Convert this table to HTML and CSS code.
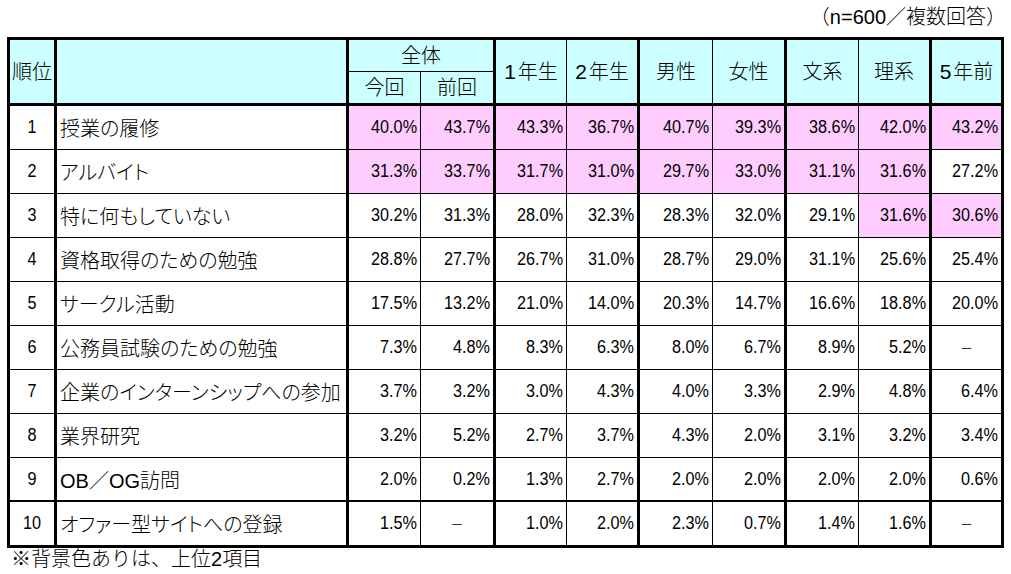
FILE: index.html
```html
<!DOCTYPE html>
<html lang="ja">
<head>
<meta charset="utf-8">
<title>活動ランキング</title>
<link rel="stylesheet" href="styles.css">
</head>
<body>
<div class="page">
  <div class="note">（n=600／複数回答）</div>
  <table class="rank-table">
    <colgroup>
      <col class="c-rank"><col class="c-item"><col class="c-now"><col class="c-prev">
      <col class="c-g1"><col class="c-g2"><col class="c-m"><col class="c-f">
      <col class="c-bun"><col class="c-ri"><col class="c-5y">
    </colgroup>
    <thead>
      <tr class="hr1">
        <th rowspan="2" class="h rs t3">順位</th>
        <th rowspan="2" class="h rs t3"></th>
        <th colspan="2" class="h t3">全体</th>
        <th rowspan="2" class="h rs"><span class="hd">1</span>年生</th>
        <th rowspan="2" class="h rs t3"><span class="hd">2</span>年生</th>
        <th rowspan="2" class="h rs">男性</th>
        <th rowspan="2" class="h rs t3">女性</th>
        <th rowspan="2" class="h rs">文系</th>
        <th rowspan="2" class="h rs t3">理系</th>
        <th rowspan="2" class="h rs t3"><span class="hd">5</span>年前</th>
      </tr>
      <tr class="hr2">
        <th class="h rs">今回</th>
        <th class="h rs t3">前回</th>
      </tr>
    </thead>
    <tbody>
      <tr>
        <td class="rk t3"><span class="v">1</span></td><td class="it t3">授業の履修</td>
        <td class="n pk"><span class="v">40.0%</span></td><td class="n pk t3"><span class="v">43.7%</span></td>
        <td class="n pk"><span class="v">43.3%</span></td><td class="n pk t3"><span class="v">36.7%</span></td>
        <td class="n pk"><span class="v">40.7%</span></td><td class="n pk t3"><span class="v">39.3%</span></td>
        <td class="n pk"><span class="v">38.6%</span></td><td class="n pk t3"><span class="v">42.0%</span></td>
        <td class="n pk t3"><span class="v">43.2%</span></td>
      </tr>
      <tr>
        <td class="rk t3"><span class="v">2</span></td><td class="it t3">アルバイト</td>
        <td class="n pk"><span class="v">31.3%</span></td><td class="n pk t3"><span class="v">33.7%</span></td>
        <td class="n pk"><span class="v">31.7%</span></td><td class="n pk t3"><span class="v">31.0%</span></td>
        <td class="n pk"><span class="v">29.7%</span></td><td class="n pk t3"><span class="v">33.0%</span></td>
        <td class="n pk"><span class="v">31.1%</span></td><td class="n pk t3"><span class="v">31.6%</span></td>
        <td class="n t3"><span class="v">27.2%</span></td>
      </tr>
      <tr>
        <td class="rk t3"><span class="v">3</span></td><td class="it t3">特に何もしていない</td>
        <td class="n"><span class="v">30.2%</span></td><td class="n t3"><span class="v">31.3%</span></td>
        <td class="n"><span class="v">28.0%</span></td><td class="n t3"><span class="v">32.3%</span></td>
        <td class="n"><span class="v">28.3%</span></td><td class="n t3"><span class="v">32.0%</span></td>
        <td class="n"><span class="v">29.1%</span></td><td class="n pk t3"><span class="v">31.6%</span></td>
        <td class="n pk t3"><span class="v">30.6%</span></td>
      </tr>
      <tr>
        <td class="rk t3"><span class="v">4</span></td><td class="it t3">資格取得のための勉強</td>
        <td class="n"><span class="v">28.8%</span></td><td class="n t3"><span class="v">27.7%</span></td>
        <td class="n"><span class="v">26.7%</span></td><td class="n t3"><span class="v">31.0%</span></td>
        <td class="n"><span class="v">28.7%</span></td><td class="n t3"><span class="v">29.0%</span></td>
        <td class="n"><span class="v">31.1%</span></td><td class="n t3"><span class="v">25.6%</span></td>
        <td class="n t3"><span class="v">25.4%</span></td>
      </tr>
      <tr>
        <td class="rk t3"><span class="v">5</span></td><td class="it t3">サークル活動</td>
        <td class="n"><span class="v">17.5%</span></td><td class="n t3"><span class="v">13.2%</span></td>
        <td class="n"><span class="v">21.0%</span></td><td class="n t3"><span class="v">14.0%</span></td>
        <td class="n"><span class="v">20.3%</span></td><td class="n t3"><span class="v">14.7%</span></td>
        <td class="n"><span class="v">16.6%</span></td><td class="n t3"><span class="v">18.8%</span></td>
        <td class="n t3"><span class="v">20.0%</span></td>
      </tr>
      <tr>
        <td class="rk t3"><span class="v">6</span></td><td class="it t3">公務員試験のための勉強</td>
        <td class="n"><span class="v">7.3%</span></td><td class="n t3"><span class="v">4.8%</span></td>
        <td class="n"><span class="v">8.3%</span></td><td class="n t3"><span class="v">6.3%</span></td>
        <td class="n"><span class="v">8.0%</span></td><td class="n t3"><span class="v">6.7%</span></td>
        <td class="n"><span class="v">8.9%</span></td><td class="n t3"><span class="v">5.2%</span></td>
        <td class="dash t3">－</td>
      </tr>
      <tr>
        <td class="rk t3"><span class="v">7</span></td><td class="it t3">企業のインターンシップへの参加</td>
        <td class="n"><span class="v">3.7%</span></td><td class="n t3"><span class="v">3.2%</span></td>
        <td class="n"><span class="v">3.0%</span></td><td class="n t3"><span class="v">4.3%</span></td>
        <td class="n"><span class="v">4.0%</span></td><td class="n t3"><span class="v">3.3%</span></td>
        <td class="n"><span class="v">2.9%</span></td><td class="n t3"><span class="v">4.8%</span></td>
        <td class="n t3"><span class="v">6.4%</span></td>
      </tr>
      <tr>
        <td class="rk t3"><span class="v">8</span></td><td class="it t3">業界研究</td>
        <td class="n"><span class="v">3.2%</span></td><td class="n t3"><span class="v">5.2%</span></td>
        <td class="n"><span class="v">2.7%</span></td><td class="n t3"><span class="v">3.7%</span></td>
        <td class="n"><span class="v">4.3%</span></td><td class="n t3"><span class="v">2.0%</span></td>
        <td class="n"><span class="v">3.1%</span></td><td class="n t3"><span class="v">3.2%</span></td>
        <td class="n t3"><span class="v">3.4%</span></td>
      </tr>
      <tr class="r9">
        <td class="rk t3"><span class="v">9</span></td><td class="it t3">OB／OG訪問</td>
        <td class="n"><span class="v">2.0%</span></td><td class="n t3"><span class="v">0.2%</span></td>
        <td class="n"><span class="v">1.3%</span></td><td class="n t3"><span class="v">2.7%</span></td>
        <td class="n"><span class="v">2.0%</span></td><td class="n t3"><span class="v">2.0%</span></td>
        <td class="n"><span class="v">2.0%</span></td><td class="n t3"><span class="v">2.0%</span></td>
        <td class="n t3"><span class="v">0.6%</span></td>
      </tr>
      <tr class="r10">
        <td class="rk t3"><span class="v">10</span></td><td class="it t3">オファー型サイトへの登録</td>
        <td class="n"><span class="v">1.5%</span></td><td class="dash t3">－</td>
        <td class="n"><span class="v">1.0%</span></td><td class="n t3"><span class="v">2.0%</span></td>
        <td class="n"><span class="v">2.3%</span></td><td class="n t3"><span class="v">0.7%</span></td>
        <td class="n"><span class="v">1.4%</span></td><td class="n t3"><span class="v">1.6%</span></td>
        <td class="dash t3">－</td>
      </tr>
    </tbody>
  </table>
  <div class="footnote">※背景色ありは、上位<span class="fd">2</span>項目</div>
</div>
</body>
</html>
```
FILE: styles.css
```css
html, body {
  margin: 0;
  padding: 0;
  background: #ffffff;
}
body {
  font-family: "Liberation Sans", "Noto Sans CJK JP", sans-serif;
  font-weight: 400;
  color: #000000;
}
.page {
  width: 1011px;
  height: 574px;
  overflow: hidden;
}
.note {
  height: 37px;
  box-sizing: border-box;
  padding: 5px 5px 0 0;
  text-align: right;
  font-size: 20px;
  font-weight: 300;
  line-height: 24px;
}
.rank-table {
  margin-left: 7px;
  width: 997px;
  table-layout: fixed;
  border-collapse: separate;
  border-spacing: 0;
  border-left: 3px solid #000;
  border-top: 3px solid #000;
}
.c-rank { width: 47px; }
.c-item { width: 292px; }
.c-now { width: 72px; }
.c-prev { width: 75px; }
.c-g1 { width: 71px; }
.c-g2 { width: 73px; }
.c-m { width: 73px; }
.c-f { width: 74px; }
.c-bun { width: 72px; }
.c-ri { width: 73px; }
.c-5y { width: 72px; }

.rank-table th,
.rank-table td {
  box-sizing: border-box;
  padding: 0;
  border-right: 1px solid #000;
  border-bottom: 1px solid #000;
  white-space: nowrap;
  overflow: hidden;
}
.rank-table .t3 { border-right-width: 3px; }
.rank-table .rs { border-bottom-width: 3px; }

.h {
  background: #ccffff;
  font-weight: 300;
  font-size: 20px;
  text-align: center;
  vertical-align: middle;
  line-height: 24px;
}
.hd {
  font-size: 21px;
  font-weight: 400;
  margin-right: 2px;
}
.hr1 { height: 32px; }
.hr2 { height: 34px; }

.rank-table tbody tr { height: 44px; }
.rank-table tbody tr.r9 td { border-bottom-width: 2px; }
.rank-table tbody tr.r10 { height: 46px; }
.rank-table tbody tr.r10 td { border-bottom-width: 3px; }

.v {
  display: inline-block;
  transform: scaleX(0.9);
  transform-origin: right center;
}
.rk {
  text-align: center;
  font-size: 18px;
  font-weight: 400;
  vertical-align: middle;
}
.rk .v { transform-origin: center center; }
.it {
  text-align: left;
  padding-left: 3px !important;
  font-size: 20px;
  font-weight: 300;
  font-feature-settings: "palt" 1;
  vertical-align: middle;
}
.n {
  text-align: right;
  padding-right: 3px !important;
  font-size: 18px;
  font-weight: 400;
  vertical-align: middle;
}
.dash {
  text-align: center;
  font-size: 13px;
  color: #333;
  vertical-align: middle;
}
.pk { background: #ffccff; }

.footnote {
  padding-left: 11px;
  font-size: 20px;
  font-weight: 300;
  line-height: 22px;
}
.fd { font-weight: 400; }
```
